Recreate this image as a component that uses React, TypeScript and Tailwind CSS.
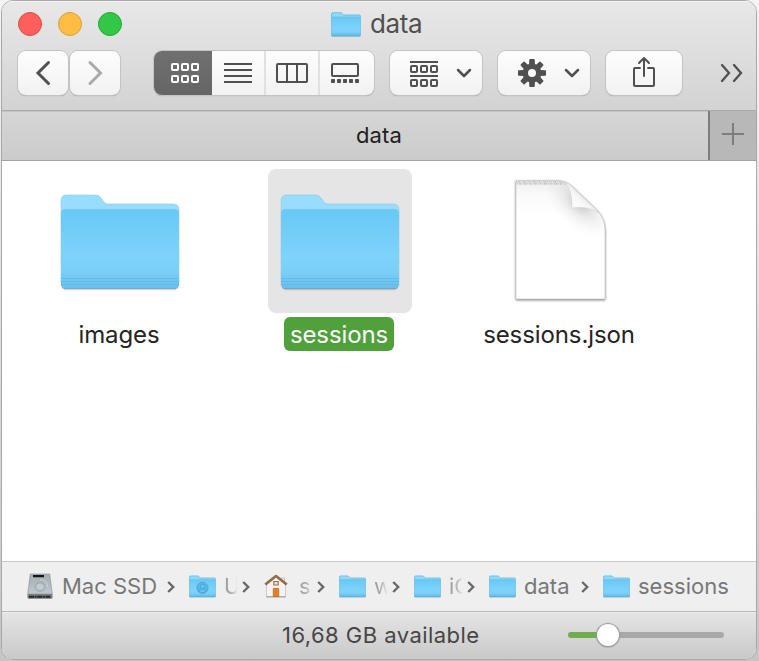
import React from "react";

function Folder({ className, small = false, person = false }: { className: string; small?: boolean; person?: boolean }) {
  return small ? (
    <svg viewBox="0 0 30 25" className={className} fill="none">
      <path d="M.5 23.5V2Q.5.7 2 .7H10L12.5 3H28Q29.5 3 29.5 4.3V23.5Z" fill="#8fd9fb" stroke="#61b5df" strokeWidth=".8" />
      <path d="M.5 5H29.5V23.2Q29.5 24 28.5 24H1.5Q.5 24 .5 23.2Z" fill="url(#folder-front)" />
      <path d="M.5 5H29.5" stroke="#68bee7" strokeWidth=".8" />
      <path d="M.7 22.2H29.3" stroke="#62bce8" strokeWidth=".7" />
      <path d="M.7 24.1H29.3" stroke="#5a9dbd" strokeWidth=".9" />
      {person && (
        <g>
          <circle cx="15" cy="14" r="6.2" fill="#5ab8e9" stroke="#43a3d6" strokeWidth=".9" />
          <circle cx="15" cy="12.3" r="2.4" fill="#69c3ef" stroke="#3d9dd0" strokeWidth=".8" />
          <path d="M10.7 18Q11.2 15.4 15 15.4T19.3 18Q15 21 10.7 18Z" fill="#69c3ef" stroke="#3d9dd0" strokeWidth=".8" />
        </g>
      )}
    </svg>
  ) : (
    <svg viewBox="0 0 120 98" className={className} fill="none">
      <path d="M1 7Q1 1 6 1H35Q39 1 41 4L44 8Q45 10 48 10H113Q119 10 119 16V90Q119 94 115 94H5Q1 94 1 90Z" fill="#98ddfe" stroke="#86cbea" strokeWidth=".6" />
      <path d="M1 20Q1 15 6 15H114Q119 15 119 20V90Q119 94 115 94H5Q1 94 1 90Z" fill="url(#folder-front)" />
      <path d="M2 17Q3 15.3 6 15.3H114Q117 15.3 118 17" stroke="#80c9ea" strokeWidth=".6" />
      <path d="M1 84.5H119M1 87.5H119M1 90.5H119" stroke="#5fb9e4" strokeWidth=".8" />
      <path d="M2 93.6Q3 94.5 5 94.5H115Q117 94.5 118 93.6" stroke="#5999b9" strokeWidth=".8" />
      <path d="M4 95.6H116" stroke="#000" strokeOpacity=".16" strokeWidth="1.4" />
    </svg>
  );
}

function Chevron({ className }: { className: string }) {
  return (
    <svg viewBox="0 0 8 12" className={className} fill="none" stroke="#686868" strokeWidth="2.4">
      <path d="M1.2 1L6.2 6L1.2 11" />
    </svg>
  );
}

function Down() {
  return (
    <svg viewBox="0 0 16 10" className="h-2.5 w-4" fill="none" stroke="#505050" strokeWidth="2.5" strokeLinecap="round" strokeLinejoin="round">
      <path d="M2 2L8 8L14 2" />
    </svg>
  );
}

const button = "flex h-[44px] shrink-0 items-center justify-center rounded-[8px] bg-gradient-to-b from-[#fdfdfd] to-[#f2f2f2] shadow-[0_0_0_1px_#c3c3c3,0_1px_1px_#8e8e8e]";

function Crumb({ icon, label, width, fade = false, textWidth }: { icon: React.ReactNode; label: string; width: string; fade?: boolean; textWidth: string }) {
  return (
    <div className={`flex shrink-0 items-center ${width}`}>
      <div className="w-[35px] shrink-0">{icon}</div>
      <span className={`-mt-0.5 block shrink-0 whitespace-nowrap ${textWidth} ${fade ? "[mask-image:linear-gradient(to_right,rgba(0,0,0,.7),rgba(0,0,0,.55)_50%,rgba(0,0,0,.08))]" : ""}`}>{label}</span>
    </div>
  );
}

function Drive() {
  return (
    <svg viewBox="0 0 26 27" className="h-[27px] w-[26px]" fill="none">
      <path d="M3.3 1H22.7L25.3 20.5V24.7Q25.3 25.5 24.4 25.5H1.6Q.7 25.5.7 24.7V20.5Z" fill="url(#drive-top)" stroke="#868f93" strokeWidth=".6" />
      <path d="M1 21H25V24.5Q25 25.2 24 25.2H2Q1 25.2 1 24.5Z" fill="#7c7f80" />
      <path d="M2 23.7H24" stroke="#292525" strokeWidth="2" strokeDasharray="5 .6 2 .6" />
      <path d="M6 3.2H17" stroke="#141414" strokeWidth="2.2" />
      <ellipse cx="13" cy="14" rx="5" ry="4.3" fill="#b4bec2" stroke="#909ca1" strokeWidth=".7" />
      <ellipse cx="13" cy="13.6" rx="3.5" ry="2.9" fill="#c3cdd1" />
      <path d="M13 6.5Q21 7 20.5 14" stroke="#d7dddf" strokeWidth=".7" />
    </svg>
  );
}

function House() {
  return (
    <svg viewBox="0 0 24 25" className="h-[25px] w-6" fill="none">
      <path d="M17.5 4H20.5V10H17.5Z" fill="#e8e8e8" stroke="#b8b8b8" strokeWidth=".7" />
      <path d="M2.5 11L12 3L21.5 11V23H2.5Z" fill="#f5f4f3" stroke="#bdb9b7" strokeWidth=".7" />
      <path d="M2.5 22.8H21.5" stroke="#999" />
      <path d="M1.2 10.5L12 2L22.8 10.5" stroke="#946b4b" strokeWidth="2.6" strokeLinejoin="round" />
      <path d="M9.8 7.5H14.2V11H9.8Z" fill="#e6e1dc" stroke="#a46c42" strokeWidth="1.1" />
      <path d="M9.3 14.5H14.7V22.5H9.3Z" fill="#ee8519" stroke="#b77035" strokeWidth=".9" />
      <path d="M12 15V22" stroke="#c96b16" strokeWidth=".5" />
    </svg>
  );
}

function Document() {
  return (
    <svg viewBox="0 0 98 130" className="mx-auto h-[130px] w-[98px] overflow-visible">
      <defs>
        <linearGradient id="page" x2="0" y2="1"><stop stopColor="#eee" /><stop offset=".12" stopColor="#fafafa" /><stop offset=".3" stopColor="#fff" /></linearGradient>
        <radialGradient id="crease"><stop stopColor="#888" stopOpacity=".5" /><stop offset=".4" stopColor="#aaa" stopOpacity=".22" /><stop offset=".7" stopColor="#ccc" stopOpacity=".1" /><stop offset="1" stopColor="#fff" stopOpacity="0" /></radialGradient>
        <linearGradient id="curl" x1="0" y1="1" x2=".65" y2=".35"><stop stopColor="#fff" /><stop offset=".65" stopColor="#f8f8f8" /><stop offset="1" stopColor="#dedede" /></linearGradient>
        <clipPath id="page-shape"><path d="M4 4.5H45Q54 4.5 61 11L84 33Q93 42 93 54V123H4Z" /></clipPath>
      </defs>
      <g className="drop-shadow-[0_1px_1px_rgba(0,0,0,.5)]"><path d="M4 4.5H45Q54 4.5 61 11L84 33Q93 42 93 54V123H4Z" fill="url(#page)" stroke="#c9c9c9" strokeWidth=".7" /></g>
      <g clipPath="url(#page-shape)">
        <ellipse cx="68" cy="27" rx="48" ry="27" transform="rotate(44 68 27)" fill="url(#crease)" />
        <path d="M4 5.8H52M5 7.8H54" stroke="#bbb" strokeWidth="1.3" strokeDasharray="1.2 .9 2 .5 .8 1.1 3 .7" />
        <path d="M4.5 6.8H53" stroke="#d5d5d5" strokeWidth="1" strokeDasharray="2 .8 .7 1.2" />
      </g>
      <path d="M53 6.5Q60 13 60 32Q76 29.5 87 37Q83 32 77 27L60 10.5Q56 6.5 53 6.5Z" fill="url(#curl)" stroke="#cdcdcd" strokeWidth=".5" />
    </svg>
  );
}

export default function App() {
  return (
    <main className="h-[661px] w-[759px] overflow-hidden bg-gradient-to-b from-[#f5f5f5] via-[#dedede] to-[#c5c5c5] pl-px font-['Inter','Liberation_Sans',sans-serif]">
      <svg className="absolute h-0 w-0" aria-hidden="true"><defs>
        <linearGradient id="folder-front" x2="0" y2="1"><stop stopColor="#69c8f5" /><stop offset=".6" stopColor="#7dd3fb" /><stop offset=".8" stopColor="#79cff7" /><stop offset="1" stopColor="#68bfeb" /></linearGradient>
        <linearGradient id="drive-top" x2="0" y2="1"><stop stopColor="#a4adb0" /><stop offset=".75" stopColor="#bcc7cb" /><stop offset="1" stopColor="#747b7e" /></linearGradient>
      </defs></svg>
      <section className="flex h-[660px] w-[756px] flex-col overflow-hidden rounded-[12px] border border-[#a8a8a8] bg-white">
        <header className="h-[110px] shrink-0 border-b border-[#aaa] bg-gradient-to-b from-[#e8e8e8] to-[#d3d3d3] shadow-[inset_0_1px_0_#f4f4f4]">
          <div className="flex h-[45px] items-center pl-4">
            <div className="flex gap-4">
              <i className="block size-6 rounded-full border border-[#e24b47] bg-[#ff605c]" />
              <i className="block size-6 rounded-full border border-[#df9d34] bg-[#ffbd44]" />
              <i className="block size-6 rounded-full border border-[#25a837] bg-[#33c748]" />
            </div>
            <Folder small className="ml-[209px] mt-px h-[25px] w-[30px]" />
            <h1 className="ml-[9px] mt-px text-[26px] font-normal leading-[30px] tracking-[-.35px] text-[#505050]">data</h1>
          </div>
          <div className="mt-[5px] flex items-center pl-4">
            <button className={`${button} w-[50px]`}><svg viewBox="0 0 18 26" className="-mt-px mr-px h-[26px] w-[18px]" fill="none" stroke="#505050" strokeWidth="3" strokeLinecap="round"><path d="M14.5 2.5L4 13L14.5 23.5" /></svg></button>
            <button className={`${button} ml-0.5 w-[50px]`}><svg viewBox="0 0 18 26" className="-mt-px h-[26px] w-[18px]" fill="none" stroke="#aaa" strokeWidth="3" strokeLinecap="round"><path d="M4 2.5L14.5 13L4 23.5" /></svg></button>
            <div className={`${button} ml-[34px] w-[220px] overflow-hidden`}>
              <button className="-mt-px flex h-[46px] w-[58px] shrink-0 items-center justify-center bg-gradient-to-b from-[#707070] to-[#656565] pl-1"><svg viewBox="0 0 28 20" className="h-5 w-7" fill="none" stroke="white" strokeWidth="2"><rect x="1" y="1" width="6" height="6" rx="1"/><rect x="11" y="1" width="6" height="6" rx="1"/><rect x="21" y="1" width="6" height="6" rx="1"/><rect x="1" y="13" width="6" height="6" rx="1"/><rect x="11" y="13" width="6" height="6" rx="1"/><rect x="21" y="13" width="6" height="6" rx="1"/></svg></button>
              <button className="flex h-full w-[54px] items-center justify-center border-r-2 border-[#e1e1e1]"><svg viewBox="0 0 28 20" className="h-5 w-7" fill="none" stroke="#505050" strokeWidth="2"><path d="M0 1H28M0 7H28M0 13H28M0 19H28" /></svg></button>
              <button className="flex h-full w-[54px] items-center justify-center border-r-2 border-[#e1e1e1]"><svg viewBox="0 0 32 20" className="h-5 w-8" fill="none" stroke="#505050" strokeWidth="2"><rect x="1" y="1" width="30" height="18" rx="1"/><path d="M11 1V19M21 1V19" /></svg></button>
              <button className="flex h-full w-[54px] items-center justify-center pr-1"><svg viewBox="0 0 28 20" className="h-5 w-7" fill="none" stroke="#505050" strokeWidth="2"><rect x="1" y="1" width="26" height="12" rx="1"/><g fill="#505050" stroke="none"><rect y="16" width="4" height="4" rx=".8"/><rect x="6" y="16" width="4" height="4" rx=".8"/><rect x="12" y="16" width="4" height="4" rx=".8"/><rect x="18" y="16" width="4" height="4" rx=".8"/><rect x="24" y="16" width="4" height="4" rx=".8"/></g></svg></button>
            </div>
            <button className={`${button} ml-4 w-[92px] gap-[18px] pl-2.5`}><svg viewBox="0 0 28 26" className="mt-0.5 h-[26px] w-7" fill="none" stroke="#505050" strokeWidth="2"><path d="M0 1H28M0 15H28"/><rect x="1" y="5" width="6" height="6" rx="1"/><rect x="11" y="5" width="6" height="6" rx="1"/><rect x="21" y="5" width="6" height="6" rx="1"/><rect x="1" y="19" width="6" height="6" rx="1"/><rect x="11" y="19" width="6" height="6" rx="1"/><rect x="21" y="19" width="6" height="6" rx="1"/></svg><Down /></button>
            <button className={`${button} ml-4 w-[92px] gap-[18px] pl-2.5`}><svg viewBox="-14 -14 28 28" className="size-7" fill="#505050"><path fillRule="evenodd" d="M-9.4 0A9.4 9.4 0 1 0 9.4 0A9.4 9.4 0 1 0-9.4 0M-4 0A4 4 0 1 1 4 0A4 4 0 1 1-4 0"/>{[0,45,90,135,180,225,270,315].map(a => <path key={a} d="M-2.7-13.2Q-2.7-14-1.9-14H1.9Q2.7-14 2.7-13.2L3-8H-3Z" transform={`rotate(${a})`} />)}</svg><Down /></button>
            <button className={`${button} ml-4 w-[76px]`}><svg viewBox="0 0 24 32" className="-mt-0.5 h-8 w-6" fill="none" stroke="#505050" strokeWidth="2" strokeLinecap="round" strokeLinejoin="round"><path d="M8 12H3Q2 12 2 13V29Q2 30 3 30H21Q22 30 22 29V13Q22 12 21 12H16"/><path d="M12 20V2M7 7L12 2L17 7" /></svg></button>
            <svg viewBox="0 0 24 20" className="ml-[37px] h-5 w-6" fill="none" stroke="#505050" strokeWidth="2.3" strokeLinecap="round"><path d="M3 2L10 10L3 18M15 2L22 10L15 18" /></svg>
          </div>
        </header>
        <div className="flex h-[50px] shrink-0 border-b border-[#a3a3a3] bg-gradient-to-b from-[#d6d6d6] to-[#cbcbcb] shadow-[inset_0_1px_0_#c4c4c4]">
          <div className="flex w-[706px] items-center justify-center pl-[48px] text-[22px] tracking-[.1px] text-[#202020]"><span className="w-full text-center">data</span></div>
          <button className="flex flex-1 items-center justify-center border-l-2 border-[#7d7d7d] bg-[#b8b8b8]"><svg viewBox="0 0 22 22" className="-mt-1 size-[22px]" stroke="#7d7d7d" strokeWidth="2"><path d="M0 11H22M11 0V22" /></svg></button>
        </div>
        <div className="flex h-[400px] shrink-0 pl-[46px] pt-2 text-[24px] leading-[36px] tracking-[-.1px] text-[#242424]">
          <figure className="flex w-[144px] flex-col items-center"><div className="flex h-[144px] w-full items-center justify-center"><Folder className="mt-1 h-[98px] w-[120px]" /></div><figcaption className="mr-0.5 mt-1">images</figcaption></figure>
          <figure className="ml-[76px] flex w-[144px] flex-col items-center"><div className="flex h-[144px] w-full items-center justify-center rounded-[8px] bg-[#e5e5e5]"><Folder className="mt-1 h-[98px] w-[120px]" /></div><figcaption className="mr-0.5 mt-1 h-[34px] w-[110px] rounded-[6px] bg-[#50a03b] text-center text-white">sessions</figcaption></figure>
          <figure className="ml-[68px] flex w-[160px] flex-col items-center"><div className="h-[144px] pl-px pt-[7px]"><Document /></div><figcaption className="mr-0.5 mt-1">sessions.json</figcaption></figure>
        </div>
        <nav className="flex h-[50px] shrink-0 items-center border-t border-[#c9c9c9] bg-[#efefef] pl-[25px] text-[22px] leading-[30px] text-[#777]">
          <Crumb icon={<Drive />} label="Mac SSD" width="w-[140px]" textWidth="w-[100px]" />
          <Chevron className="mr-3.5 h-3 w-2" />
          <Crumb icon={<Folder small person className="h-[23px] w-[27px]" />} label="U" width="w-[53px]" textWidth="w-[13px]" fade />
          <Chevron className="mr-3.5 h-3 w-2" />
          <Crumb icon={<House />} label="s" width="w-[53px]" textWidth="w-[13px]" fade />
          <Chevron className="mr-3.5 h-3 w-2" />
          <Crumb icon={<Folder small className="h-[23px] w-[27px]" />} label="w" width="w-[53px]" textWidth="w-[13px]" fade />
          <Chevron className="mr-3.5 h-3 w-2" />
          <Crumb icon={<Folder small className="h-[23px] w-[27px]" />} label="iC" width="w-[53px]" textWidth="w-[13px]" fade />
          <Chevron className="mr-3.5 h-3 w-2" />
          <Crumb icon={<Folder small className="h-[23px] w-[27px]" />} label="data" width="w-[92px]" textWidth="w-[50px]" />
          <Chevron className="mr-3.5 h-3 w-2" />
          <Crumb icon={<Folder small className="h-[23px] w-[27px]" />} label="sessions" width="w-[130px]" textWidth="w-[94px]" />
        </nav>
        <footer className="flex min-h-0 flex-1 items-center border-t border-[#b8b8b8] bg-gradient-to-b from-[#e5e5e5] to-[#c9c9c9] text-[22px] text-[#464646] shadow-[inset_0_1px_0_#ececec]">
          <span className="ml-[280px] w-[200px] whitespace-nowrap tracking-[.46px]">16,68 GB available</span>
          <div className="-mt-0.5 ml-[86px] flex h-6 w-[156px] items-center"><i className="h-1.5 w-[30px] rounded-l-full bg-[#70ad4e]" /><i className="z-10 -mx-px size-[22px] rounded-full bg-white shadow-[0_0_1px_1px_#999,0_1px_2px_#888]" /><i className="h-1.5 flex-1 rounded-r-full bg-[#a9a9a9]" /></div>
        </footer>
      </section>
    </main>
  );
}
